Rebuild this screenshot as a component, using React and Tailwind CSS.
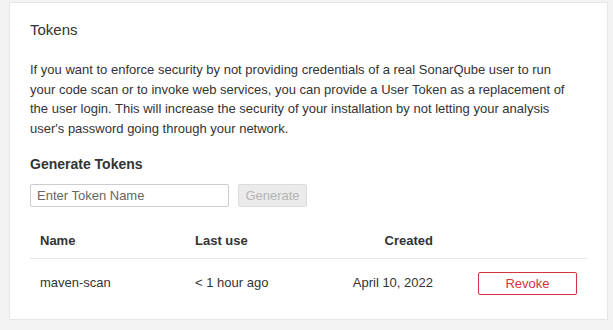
export default function App() {
  return (
    <div
      className="min-h-[330px] bg-[#f3f3f3] pt-[2px] pl-[9px] pr-[5px] text-[#333]"
      style={{ fontFamily: '"Liberation Sans", Arial, sans-serif' }}
    >
      <div className="h-[318px] bg-white border border-[#e6e6e6] px-5 pt-[17px]">
        <h2 className="text-[15px] leading-5 font-normal">Tokens</h2>
        <p className="mt-5 text-[13px] leading-[19.5px] whitespace-nowrap">
          If you want to enforce security by not providing credentials of a real SonarQube user to run
          <br />
          your code scan or to invoke web services, you can provide a User Token as a replacement of
          <br />
          the user login. This will increase the security of your installation by not letting your analysis
          <br />
          user's password going through your network.
        </p>
        <h3 className="mt-4 text-[14px] leading-5 font-bold">Generate Tokens</h3>
        <div className="mt-[10px] flex items-center gap-[9px]">
          <input
            type="text"
            placeholder="Enter Token Name"
            className="h-[23px] w-[199px] border border-[#cdcdcd] rounded-[2px] px-[6px] text-[13px] text-[#333] placeholder:text-[#666] outline-none"
          />
          <button
            disabled
            className="h-[23px] w-[69px] border border-[#dcdcdc] rounded-[2px] bg-[#ebebeb] text-[13px] text-[#b4b4b4]"
          >
            Generate
          </button>
        </div>
        <div className="mt-[14px] text-[13px]">
          <div className="grid grid-cols-[155px_145px_113px_1fr] border-b border-[#e6e6e6] pt-[10px] pb-[7px] font-bold leading-5">
            <div className="pl-[10px]">Name</div>
            <div className="pl-[10px]">Last use</div>
            <div className="pr-[10px] text-right">Created</div>
            <div></div>
          </div>
          <div className="grid grid-cols-[155px_145px_113px_1fr] pt-[13px] items-start">
            <div className="pl-[10px] mt-[1px] leading-[19px]">maven-scan</div>
            <div className="pl-[10px] mt-[1px] leading-[19px]">&lt; 1 hour ago</div>
            <div className="pr-[10px] mt-[1px] leading-[19px] text-right">April 10, 2022</div>
            <div className="flex justify-end pr-[10px]">
              <button className="h-[23px] w-[99px] border border-[#d4333f] rounded-[2px] bg-white text-[13px] text-[#d4333f]">
                Revoke
              </button>
            </div>
          </div>
        </div>
      </div>
    </div>
  );
}
